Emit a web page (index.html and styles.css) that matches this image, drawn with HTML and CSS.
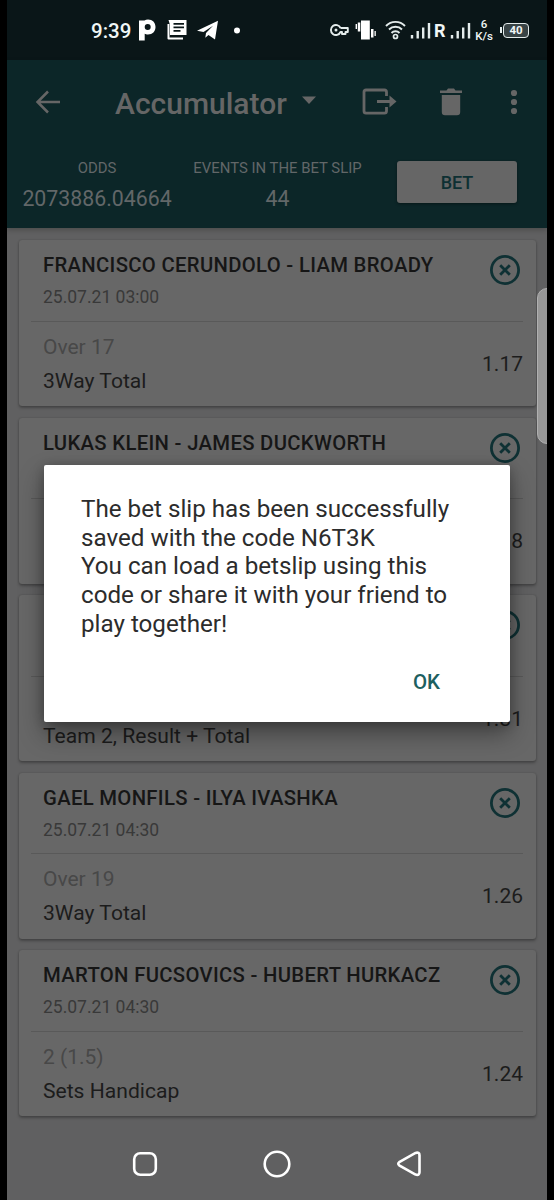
FILE: index.html
```html
<!DOCTYPE html>
<html lang="en">
<head>
<meta charset="utf-8">
<title>Accumulator</title>
<link rel="stylesheet" href="styles.css">
</head>
<body>
<svg class="defs" width="0" height="0"><defs>
  <symbol id="close" viewBox="0 0 32 32"><circle cx="16" cy="16" r="13.6"/><path d="M11.2 11.2L20.8 20.8M20.8 11.2L11.2 20.8"/></symbol>
</defs></svg>
<div class="phone">
  <div class="status">
    <span class="clock">9:39</span>
    <svg class="status-left" width="110" height="24" viewBox="0 0 110 24" fill="#fff">
      <path fill-rule="evenodd" d="M2 2.500H7.500C8.500 1.800 9.600 1.500 11 1.500C15.500 1.500 18.500 4.500 18.500 9C18.500 13.500 15.500 16.500 11 16.500C9.500 16.500 8.500 16.200 7.700 15.800V22.500H2ZM10.700 6A2.900 2.900 0 1 0 10.700 12A2.900 2.900 0 1 0 10.700 6Z"/>
      <path fill-rule="evenodd" d="M33 2H49.500V17H33V7L31.500 2ZM36.500 5V6.700H47V5ZM36.500 8.500V10.200H47V8.500ZM36.500 12V13.700H43.500V12Z"/>
      <path d="M31.500 6V20.500H46" fill="none" stroke="#fff" stroke-width="2" stroke-linejoin="round"/>
      <path d="M60 12.700L81 2.800L78 21.500L71.500 17L68.300 19.800L69 15L76 7.800L66.500 14Z"/>
      <circle cx="100" cy="12.500" r="3"/>
    </svg>
    <svg class="status-net" width="104" height="24" viewBox="0 0 104 24" fill="none" stroke="#e4ecec">
      <path d="M11.500 10A5 5 0 1 0 11.500 14H13V16H16.500V14H18.800V10H11.500" stroke-width="1.900" stroke-linejoin="round"/><circle cx="7" cy="12" r="1.500" fill="#e4ecec" stroke="none"/>
      <g fill="#fff" stroke="none"><path d="M32 2.500h8.800v19H32zM28.800 4.500h2.500v9h-2.500zM26.600 6h1.400v5h-1.400zM42 11h2.500v8.500h-2.500zM45.500 13h1.300v5h-1.300z"/></g>
      <path d="M57 8A13 13 0 0 1 76 8M60 11.500A9 9 0 0 1 73 11.500M62.500 15A5.500 5.500 0 0 1 70.500 15" stroke-width="1.900"/><circle cx="66.500" cy="18.500" r="2" stroke-width="1.700"/>
      <path d="M83 17v3.500M88.700 13v7.500M94.200 9.500v11M100 5v15.500" stroke-width="2.400"/>
    </svg>
    <span class="roam">R</span>
    <svg class="bars" width="22" height="24" viewBox="0 0 22 24"><path d="M2 17v3.500M7.700 13v7.500M13.200 9.500v11M19 5v15.500" stroke="#e4ecec" stroke-width="2.400"/></svg>
    <span class="speed"><span>6</span><span>K/s</span></span>
    <span class="nub"></span><span class="battery">40</span>
  </div>
  <header class="head">
    <div class="toolbar">
      <svg class="back" width="28" height="26" viewBox="0 0 28 26"><path d="M26 13H3.500M14 2.500L3.500 13L14 23.500"/></svg>
      <h1>Accumulator</h1>
      <svg class="caret" width="16" height="9" viewBox="0 0 16 9"><path d="M1 .5H15L8 8Z"/></svg>
      <svg class="export" width="36" height="28" viewBox="0 0 36 28"><path d="M24.500 8V4Q24.500 2 22.500 2H4Q2 2 2 4V23Q2 25.200 4 25.200H22.500Q24.500 25.200 24.500 23V19M15 13.500H30"/><path class="fill" d="M27.500 7.500L34.500 13.500L27.500 19.500Z"/></svg>
      <svg class="bin" width="22" height="28" viewBox="0 0 22 28"><path d="M0 2.500H6.500L8 .5H14L15.500 2.500H22V5H0ZM1.800 7H20.200V24Q20.200 27.200 17 27.200H5Q1.800 27.200 1.800 24Z"/></svg>
      <svg class="more" width="8" height="26" viewBox="0 0 8 26"><circle cx="4" cy="4" r="3.100"/><circle cx="4" cy="13" r="3.100"/><circle cx="4" cy="22" r="3.100"/></svg>
    </div>
    <div class="summary">
      <div class="stat odds"><span class="label">ODDS</span><span class="value">2073886.04664</span></div>
      <div class="stat events"><span class="label">EVENTS IN THE BET SLIP</span><span class="value">44</span></div>
      <button class="bet">BET</button>
    </div>
  </header>
  <main class="list">
    <article class="card">
      <div class="top"><div><h2>FRANCISCO CERUNDOLO - LIAM BROADY</h2><p class="date">25.07.21 03:00</p></div><svg class="close"><use href="#close"/></svg></div>
      <div class="bottom"><div><p class="pick">Over 17</p><p class="market">3Way Total</p></div><span class="coef">1.17</span></div>
    </article>
    <article class="card">
      <div class="top"><div><h2>LUKAS KLEIN - JAMES DUCKWORTH</h2></div><svg class="close"><use href="#close"/></svg></div>
      <div class="bottom"><div></div><span class="coef">8</span></div>
    </article>
    <article class="card">
      <div class="top"><div></div><svg class="close"><use href="#close"/></svg></div>
      <div class="bottom"><div><p class="pick">&nbsp;</p><p class="market">Team 2, Result + Total</p></div><span class="coef">1.31</span></div>
    </article>
    <article class="card">
      <div class="top"><div><h2>GAEL MONFILS - ILYA IVASHKA</h2><p class="date">25.07.21 04:30</p></div><svg class="close"><use href="#close"/></svg></div>
      <div class="bottom"><div><p class="pick">Over 19</p><p class="market">3Way Total</p></div><span class="coef">1.26</span></div>
    </article>
    <article class="card">
      <div class="top"><div><h2>MARTON FUCSOVICS - HUBERT HURKACZ</h2><p class="date">25.07.21 04:30</p></div><svg class="close"><use href="#close"/></svg></div>
      <div class="bottom"><div><p class="pick">2 (1.5)</p><p class="market">Sets Handicap</p></div><span class="coef">1.24</span></div>
    </article>
  </main>
  <nav class="nav">
    <svg width="28" height="28" viewBox="0 0 28 28"><rect x="3.200" y="3.200" width="21.600" height="21.600" rx="6"/></svg>
    <svg width="28" height="28" viewBox="0 0 28 28"><circle cx="14" cy="14" r="12.300"/></svg>
    <svg width="28" height="28" viewBox="0 0 28 28"><path d="M4.200 12.200L20.500 2.900Q24.500 1.800 24.500 5.200V22.300Q24.500 25.700 20.500 24.600L4.200 15.300Q2.300 13.750 4.200 12.200Z"/></svg>
  </nav>
  <div class="edge"></div>
  <div class="dialog">
    <p>The bet slip has been successfully<br>saved with the code N6T3K<br>You can load a betslip using this<br>code or share it with your friend to<br>play together!</p>
    <button class="ok">OK</button>
  </div>
</div>
</body>
</html>
```
FILE: styles.css
```css
* { box-sizing: border-box; }
body { margin: 0; background: #000; font-family: Roboto, "Liberation Sans", sans-serif; }
h1, h2, p { margin: 0; font-weight: 400; white-space: nowrap; }
button { border: 0; padding: 0; font: inherit; }
svg { display: block; flex: none; }
.defs { position: absolute; }
.phone { position: relative; width: 540px; height: 1200px; margin: 0 auto; background: #606061; overflow: hidden; }

.status { display: flex; align-items: center; height: 60px; padding-left: 84px; background: #0a1618; color: #f0f6f6; }
.status > * { flex: none; }
.clock { width: 46px; font-size: 20.5px; font-weight: 500; line-height: 24px; padding-top: 2px; }
.status-net { margin-left: 82px; }
.roam { width: 11px; margin-left: 1px; font-size: 18px; font-weight: 700; text-align: center; }
.bars { margin-left: 5px; }
.speed { display: flex; flex-direction: column; align-items: center; width: 20px; margin-left: 2px; font-size: 11.5px; font-weight: 500; line-height: 12px; }
.nub { width: 2px; height: 6px; margin-left: 6px; background: #e4ecec; }
.battery { width: 26px; height: 15px; margin-left: 1px; border: 1.5px solid #e4ecec; border-radius: 4px; background: #394446; font-size: 11.5px; font-weight: 700; line-height: 13px; text-align: center; }

.head { height: 168px; background: #0c2628; color: #626768; box-shadow: 0 2px 5px rgba(0,0,0,.22); }
.toolbar { display: flex; align-items: center; height: 84px; padding-left: 27px; }
.back { fill: none; stroke: #666; stroke-width: 2.5; }
h1 { width: 172px; margin-left: 53px; padding-top: 4px; font-size: 30px; font-weight: 500; line-height: 34px; color: #666; }
.caret { margin: -4px 0 0 14px; fill: #666; }
.export { margin-left: 45px; fill: none; stroke: #666; stroke-width: 2.8; }
.export .fill { fill: #666; stroke: none; }
.bin { margin-left: 42px; fill: #666; }
.more { margin-left: 48px; fill: #666; }
.summary { display: flex; height: 84px; }
.stat { display: flex; flex-direction: column; align-items: center; padding-top: 14px; white-space: nowrap; }
.odds { width: 180px; }
.events { width: 181px; }
.label { font-size: 14.9px; line-height: 20px; }
.value { margin-top: 8px; font-size: 21.3px; line-height: 26px; }
.bet { width: 120px; height: 42px; margin: 17px 0 0 29px; border-radius: 3px; background: #666; color: #0e3033; font-size: 18px; font-weight: 500; box-shadow: 0 1px 3px rgba(0,0,0,.4); }

.list { display: grid; grid-auto-rows: 166px; gap: 11.5px; height: 905px; padding: 12px 11px 0 12px; }
.card { border-radius: 3px; background: #676767; color: #1c1c1c; box-shadow: 0 2px 3px rgba(0,0,0,.28), 0 0 2px rgba(0,0,0,.2); }
.top { display: flex; justify-content: space-between; height: 81.6px; margin: 0 13px 0 12px; padding-left: 12px; border-bottom: 1.5px solid #595959; }
h2 { padding-top: 12px; font-size: 20.3px; font-weight: 500; line-height: 26px; letter-spacing: .32px; color: #161616; }
.date { padding-top: 8px; font-size: 17.5px; line-height: 22px; color: #393939; }
.close { width: 32px; height: 32px; margin: 14px 2px 0 0; fill: none; stroke: #0f3134; stroke-width: 2.8; }
.bottom { display: flex; justify-content: space-between; padding: 12px 13px 0 24px; }
.pick { font-size: 21px; line-height: 26px; color: #484848; }
.market { padding-top: 8px; font-size: 21.1px; line-height: 26px; }
.coef { padding-top: 17px; font-size: 21px; line-height: 26px; }

.nav { display: flex; gap: 104px; align-items: center; height: 62px; padding-left: 124px; }
.nav svg { fill: none; stroke: #fff; stroke-width: 2.6; }
.edge { position: absolute; left: 530px; top: 288px; width: 20px; height: 156px; border-radius: 14px; background: #979797; border: 1.5px solid #b0b0b0; }

.dialog { position: absolute; left: 37px; top: 465px; width: 466px; height: 257px; padding: 30px 37px 0; border-radius: 2px; background: #fff; color: #2c2c2c; font-size: 24.2px; line-height: 28.7px; box-shadow: 0 12px 24px rgba(0,0,0,.36), 0 2px 12px rgba(0,0,0,.24); }
.ok { display: block; margin: 30px 33px 0 auto; background: none; color: #1d6060; font-size: 20.5px; font-weight: 500; line-height: 26px; }
```
